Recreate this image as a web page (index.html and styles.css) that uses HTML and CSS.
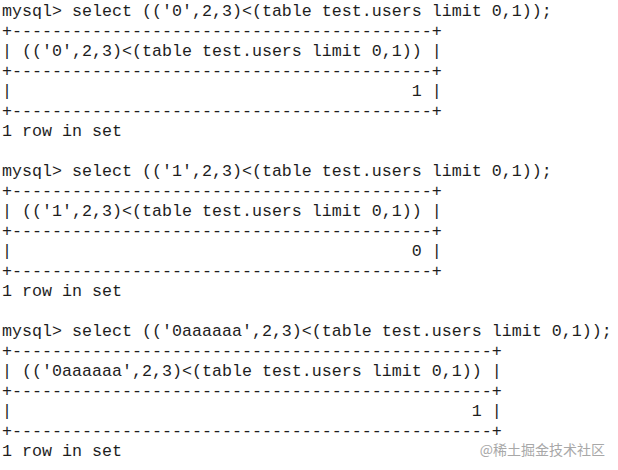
FILE: index.html
```html
<!DOCTYPE html>
<html>
<head>
<meta charset="utf-8">
<link rel="stylesheet" href="styles.css">
</head>
<body>
<div class="screen">
<div class="term">
<div class="ln">mysql&gt; select (('0',2,3)&lt;(table test.users limit 0,1));</div>
<div class="ln">+------------------------------------------+</div>
<div class="ln">| (('0',2,3)&lt;(table test.users limit 0,1)) |</div>
<div class="ln">+------------------------------------------+</div>
<div class="ln">|                                        1 |</div>
<div class="ln">+------------------------------------------+</div>
<div class="ln">1 row in set</div>
<div class="ln"> </div>
<div class="ln">mysql&gt; select (('1',2,3)&lt;(table test.users limit 0,1));</div>
<div class="ln">+------------------------------------------+</div>
<div class="ln">| (('1',2,3)&lt;(table test.users limit 0,1)) |</div>
<div class="ln">+------------------------------------------+</div>
<div class="ln">|                                        0 |</div>
<div class="ln">+------------------------------------------+</div>
<div class="ln">1 row in set</div>
<div class="ln"> </div>
<div class="ln">mysql&gt; select (('0aaaaaa',2,3)&lt;(table test.users limit 0,1));</div>
<div class="ln">+------------------------------------------------+</div>
<div class="ln">| (('0aaaaaa',2,3)&lt;(table test.users limit 0,1)) |</div>
<div class="ln">+------------------------------------------------+</div>
<div class="ln">|                                              1 |</div>
<div class="ln">+------------------------------------------------+</div>
<div class="ln">1 row in set</div>
</div>
<div class="watermark">@稀土掘金技术社区</div>
</div>
</body>
</html>
```

FILE: styles.css
```css
html, body {
  margin: 0;
  padding: 0;
  background: #ffffff;
}
.screen {
  position: relative;
  width: 618px;
  height: 470px;
  overflow: hidden;
}
.term {
  margin: 0;
  padding: 2px 0 0 2px;
  font-family: "Liberation Mono", "Courier New", monospace;
  font-size: 16.667px;
  line-height: 20px;
  color: #1e1e1e;
}
.ln {
  white-space: pre;
  width: max-content;
  min-height: 20px;
}
.watermark {
  position: absolute;
  right: 13px;
  top: 440px;
  font-family: "Noto Sans CJK SC", "Noto Sans", sans-serif;
  font-size: 14px;
  line-height: 18px;
  color: #a8a8a8;
}
```
